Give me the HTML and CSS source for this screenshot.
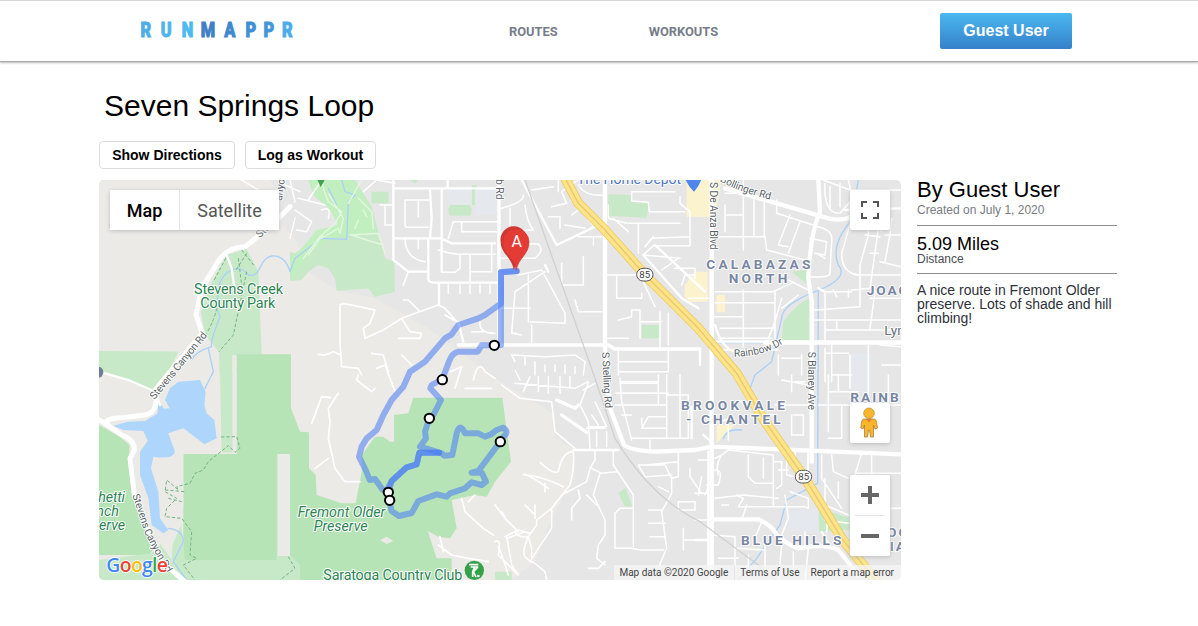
FILE: index.html
```html
<!DOCTYPE html>
<html lang="en">
<head>
<meta charset="utf-8">
<title>RunMappr</title>
<link rel="stylesheet" href="styles.css">
</head>
<body>
<header class="header">
  <svg class="logo" viewBox="0 0 156 24" role="img" aria-label="RUNMAPPR">
    <g transform="translate(.6 19) scale(.82 1)">
      <text x="0" fill="#4eaee5" stroke="#4eaee5">R</text><text x="24.5" fill="#4fb4ea" stroke="#4fb4ea">U</text><text x="50.3" fill="#4cbaf1" stroke="#4cbaf1">N</text>
      <text x="73.5" fill="#3f7fc6" stroke="#3f7fc6">M</text><text x="102" fill="#3e88cf" stroke="#3e88cf">A</text><text x="127.8" fill="#408fd4" stroke="#408fd4">P</text>
      <text x="150" fill="#4297da" stroke="#4297da">P</text><text x="172.5" fill="#4aace8" stroke="#4aace8">R</text>
    </g>
  </svg>
  <nav class="nav"><a>ROUTES</a><a>WORKOUTS</a></nav>
  <button class="user">Guest User</button>
</header>
<main class="main">
  <h1 class="title">Seven Springs Loop</h1>
  <div class="actions"><button class="action directions">Show Directions</button><button class="action workout">Log as Workout</button></div>
  <div class="content">
    <section class="map">
      <svg class="canvas" viewBox="12 15 2406 1200">
        <defs>
          <path id="canyon" d="M174 671L231 602 335 475"/>
          <path id="canyon2" d="M114 960L152 1075Q180 1130 214 1188"/>
          <path id="canyon3" d="M494 190L560 130"/>
          <path id="boll" d="M1874 18Q1940 55 2036 76"/>
          <path id="rain" d="M1917 545Q2010 544 2070 502"/>
        </defs>
        <rect width="2430" height="1230" fill="#e6e6e6"/>
        <path class="rural" d="M0 0H510L560 60 560 150 600 190 640 290 725 345 840 370 1000 460 1200 610 1380 720 1380 790 1440 820 1435 910 1360 1050 1320 1160 1250 1215H0Z"/>
        <!-- parks and open space -->
        <path class="park2" d="M395 240L455 222 490 290 500 540H412V832H380L372 530 330 480 318 410 345 330ZM12 528L250 530 205 615 180 655 105 620 15 590Z"/>
        <path class="park2" d="M585 230L600 235 740 140 700 100 655 60 640 15H780L830 95 850 170 870 250 898 260 900 350 840 366 820 340 725 348 720 310 700 280 670 270 640 290 620 315 585 318Z"/>
        <path fill="#c2efbf" d="M585 250L608 235 665 165 730 150 700 95 655 60 645 15H775L825 90 840 170 700 190 650 230 600 300 585 310Z"/>
        <path class="park" d="M425 538H588V700L615 770 642 772V880L662 900 665 960 740 985H782L800 890 800 840 840 785H865L885 800H897V720L940 715 955 668H1222L1248 860 1200 920 1175 965 1140 960 1070 975 1085 1060 1065 1090 1030 1085 998 1068 1025 1150 1070 1150 1070 1215H265V837H425ZM12 750L75 785 103 810 103 890 135 1010 185 1100 165 1140H12Z"/>
        <path class="park2" d="M12 1155L170 1135 200 1105 235 1160 258 1070 258 1155H545V1143H587L615 1170V1215H12Z"/>
        <path class="rural" d="M547 837H585V1143H547ZM413 545H424V835H413ZM855 1095L875 1085 895 1098 875 1107Z"/>
        <path class="rural" d="M185 1090L230 1155 265 1000V837H380V600H230L180 660 12 600V735L115 805 110 890Z"/>
        <path class="park2" d="M12 590L12 530 250 530 190 650 100 615ZM232 1110L258 1050 270 1155 H230ZM375 590H412V832H380Z"/>
        <path class="park2" d="M830 50H880V85H830ZM1065 90H1125Q1135 105 1125 122H1065Q1055 105 1065 90ZM1130 30H1145V90H1130ZM945 15H970L960 25ZM1540 58L1610 60 1612 82 1662 85 1655 128 1538 122ZM1640 450H1695V490H1640ZM2060 495L2065 440Q2100 390 2142 370L2150 495ZM2090 290L2135 285V328ZM2170 1000L2270 1030V1065L2172 1070ZM1570 955L1592 938 1612 995H1590ZM1200 1190H1250V1215H1200Z"/>
        <path class="cream" d="M1775 15H1880L1860 125H1775ZM1770 330L1800 290H1838V380H1785L1768 365ZM1865 360H1890V412H1865ZM1865 750H1920L1865 805Z"/>
        <path class="campus" d="M1055 45L1130 30V90H1060ZM1140 40H1205V120H1140ZM2265 535H2330V615H2265ZM2270 600H2330V650H2270ZM2075 1010L2170 1000V1070H2085Z"/>
        <!-- reservoir and creeks -->
        <path class="water" d="M210 675L225 640 250 620 315 615 332 650 328 690 335 715 358 735 365 790 328 808 285 775 265 760 220 775 240 830Q235 855 175 845L168 880 190 950 195 1030 220 1065 205 1075 170 1050 160 970 135 900 135 830 158 798 145 768 85 765 55 752 100 740 150 738 188 715 190 675 207 701 224 700Z"/>
        <g class="creek"><path d="M700 40L725 90M740 15L750 50 780 60 760 80 755 193 680 190 600 250 585 290Q570 240 530 243C490 250 500 310 460 300 430 260 380 290 370 340L365 400 375 425Q345 500 350 515 300 530 290 555M340 520L355 590 330 640M220 1060Q265 1065 265 1100L235 1160 275 1215M2290 15L2270 135Q2205 210 2230 270 2265 310 2160 350 2060 390 2060 430L2030 560 1980 600 1965 640M2170 350 2168 925 2075 975 2055 1050 1985 1150 1930 1215M1865 503H2020M1885 790Q1895 760 1940 765"/></g>
        <!-- trails -->
        <path class="trail" d="M400 235L355 320M440 225L480 275M455 235L420 290M455 290L415 480 372 530M430 250L440 330M365 400Q360 430 335 475"/>
        <path class="trail" d="M378 786L425 785 435 820 420 832 400 812 365 840 340 860 325 885 300 895 285 925 245 935 250 945 215 915 210 950 245 970 215 1000 210 1025 260 1030 290 1070 285 1140 305 1150 265 1170 300 1215M210 945L270 950M220 970L260 980M580 1145L600 1180 555 1215"/>
        <!-- local streets -->
        <g class="tiny">
          <path d="M845 580 870 570M735 390L745 385 840 405 825 445 805 460 810 490 865 465 920 430 1030 390 1050 400 1085 440M735 390V500L740 575 790 580 800 600M738 540L715 530 690 540 670 538M830 535L865 540 880 590M920 430L945 470 980 475 975 490 910 490M920 540L950 570M925 375H940L975 410M940 290L925 330M1050 420L1085 440"/>
          <path d="M650 745L680 665 707 668M730 655L700 700 705 740 700 790 720 880 750 920 795 920M700 850L660 880M790 600 785 615 830 650 840 640M870 570L900 650M1065 590 1100 575 1080 640M1135 615Q1150 550 1170 590L1200 610M1110 640H1190"/>
          <path d="M1285 900Q1290 890 1360 940M1405 935Q1330 900 1290 900M1350 925L1350 950M1450 945L1455 970 1430 1000V1035M1220 1010 1230 1025M1200 990L1230 1030 1270 1070M1320 990V1030M1290 990L1320 1020M1235 1090 1290 1070M1210 1115Q1225 1150 1240 1200M1335 862Q1375 900 1390 890 1400 835 1430 830M1530 1160 1510 1180H1480M1475 960 1505 990"/>
          <path d="M1100 970 1110 1010 1165 1060 1195 1080M1120 980 1140 960M1030 1110 1070 1140 1120 1150 1180 1160M1035 1085 1045 1130"/>
        </g>
        <g class="small">
          <path d="M440 15 490 45M570 30 615 50M600 130 585 190M585 15 600 80M610 70 690 90M600 105 650 140 635 170 605 165M680 105Q710 90 700 130M640 75 680 15M805 50 845 15 900 25M855 90H895M870 90V150H895"/>
          <path d="M1005 75H930V150Q930 157 940 157H1000M970 75V125M930 190Q930 250 990 260M970 190V220M1060 190 1075 140H1215M1100 140V170H1215M1030 225Q1060 235 1090 238H1200M1125 240V320M1095 240V280L1080 292H1040M1190 205V290H1130M1060 330V355M1095 330V355M1125 330V355M1155 330V355M1185 330V355M1155 440Q1150 475 1200 475M1130 470H1165M1130 510H1200"/>
          <path d="M1220 100Q1290 80 1285 60M1245 100V150M1290 90Q1295 140 1315 165H1245M1220 205 1330 207Q1350 225 1320 250H1215M1270 300 1340 285 1370 340 1410 415V445L1300 440M1300 300V440M1265 475H1250L1260 350 1350 290M1215 400H1305M1310 450V505M1250 475 1280 480M1310 45 1375 35M1370 95 1415 85 1400 50 1450 15M1360 125H1395V160M1390 15V50M1410 150 1470 160M1450 30Q1470 65 1525 60M1430 120 1470 90"/>
          <path d="M1400 265V330H1465V245M1440 375 1450 410H1520M1450 185H1520M1495 185V210M1535 300H1635L1680 395M1565 300V370H1640V355M1570 435 1610 425V405H1635V490M1635 440H1700M1695 410V520M1600 490H1535M1720 415V510M1540 90V130L1595 145M1555 130 1600 170M1630 145V235"/>
          <path d="M1610 50V78L1660 82 1663 110H1770M1610 50H1740M1755 65V85L1785 110V210M1600 145H1755M1650 215 1670 190 1785 185M1645 240 1675 212H1785M1645 240 1755 250M1700 285 1750 250M1740 280H1800V310M1760 330 1770 300H1800M1675 185 1650 215M1780 370H1840"/>
          <path d="M1260 560 1250 540 1350 545 1440 540 1470 560 1465 600M1290 545V570M1320 560V600M1350 570V590M1380 570V590M1410 570V595M1440 575V595M1260 585 1275 615M1570 560H1720M1570 590H1720M1570 530V600M1720 525 1720 590M1560 655H1720M1580 620H1690"/>
        </g>
        <g class="small">
          <path d="M1845 15V60M1890 55H1950M1890 90V170M1890 120H1945M1945 15V225M1977 50V185M2008 60V185M1865 185H2010L2015 225 2130 255M2045 75V115L2185 160M2085 120 2050 210M2115 140 2080 235M2050 210 2080 215M2145 190 2195 200 2190 240 2160 235M2160 155Q2215 160 2210 200L2205 290Q2210 310 2145 305M2165 235 2190 250M2190 25Q2185 115 2235 115L2265 80M2205 35V100M2235 25V95M2265 90V115M2260 15 2275 80"/>
          <path d="M2185 15 2265 45H2418M2270 130 2240 235Q2240 300 2300 300M2295 130 2320 155V180M2330 105 2360 170M2320 180 2295 270V395M2350 160 2325 340 2270 345M2390 130 2385 180 2370 260M2370 180H2418M2310 180 2355 185M2325 235H2350M2280 300H2418M2355 260 2418 275M2340 350 2325 460M2325 370H2418M2190 350H2270M2190 350V500M2160 405 2295 395M2155 435H2418M2190 465H2418M2225 435V465M2215 345 2225 365M2260 345V365"/>
          <path d="M1860 350H2035L2055 340 2090 325M1860 383H2040M1850 425H1945M1945 345V515M1875 460H2040M1870 490H2030M1880 525H2050M2040 350V490M2060 370 2040 440 2020 490M2080 315 2140 345M2110 360 2060 400M2190 520V620M2210 505V620M2320 510V690M2265 540V640M2355 510 2418 515M2190 535H2260M2360 570H2418M2210 600H2270M2050 540V600M2120 540V600M2060 550H2120"/>
        </g>
        <g class="small">
          <path d="M1220 630 1275 670 1370 680 1380 770 1440 820M1305 605 1285 650M1330 605V650M1360 605V655M1395 605V655M1425 605V640M1260 625 1440 640 1480 620M1480 625 1455 690 1480 740 1485 820M1500 680 1535 755H1480M1505 770V815M1535 770V815M1475 760H1530M1490 720 1510 750M1465 645 1500 625"/>
          <path d="M1500 825V855L1485 880 1475 920 1400 960 1370 1000 1370 1060 1330 1120 1305 1160M1490 880 1520 895 1565 890M1515 895 1495 960 1530 1035V1080L1510 1110 1505 1150 1530 1170M1555 825V870L1615 960V1115M1615 1000H1575L1560 1015V1120H1610L1635 1125H1705M1630 870H1710L1730 910V955L1700 1010 1715 1120 1690 1180M1630 870 1650 905 1730 900M1650 870 1750 860V830M1750 860V905L1730 910M1785 880V905L1820 955M1690 935 1720 950M1660 1005H1700M1660 1045H1710M1665 1085H1710M1750 980V1005H1800V980ZM1765 1060V1125M1765 1095H1800"/>
          <path d="M1435 830Q1440 880 1425 930L1370 1000 1325 1035V1050L1300 1085Q1280 1130 1290 1145L1300 1155 1320 1165 1350 1190 1355 1215M1235 1085 1250 1170 1270 1200M1260 1070Q1270 1090 1300 1085L1310 1120V1150M1200 1100Q1220 1090 1210 1140L1270 1200M1230 1085 1270 1065 1305 1075"/>
          <path d="M1575 625H1690V690M1570 655H1680M1560 690H1715V660H1780M1715 600V790M1755 600V790M1780 660V790M1665 795V820M1610 790H1780M1640 760H1715M1640 760 1660 725 1715 725M1640 750 1640 730M1580 720H1610M1690 600V660M1575 610 1580 680 1610 795"/>
        </g>
        <g class="small">
          <path d="M1880 740 1900 730V795M1930 680H1980V720M2005 720H2045M2095 720H2125V780H2090V720M2060 615 2140 630M2090 600V650M2040 690H2160M2100 620H2130M2200 600V770M2240 690V790H2200M2230 600V650M2200 650H2290M2380 600V690M2180 840V910L2240 1000M2210 840 2215 890 2260 910M2170 690H2418M2300 835 2280 900M2330 830V900M2280 895H2418M2230 920V970M2190 910 2190 990 2260 1020"/>
          <path d="M1860 850 1880 840 1900 825 2035 840V990M1960 840V905L1980 925H2035M2005 850V910M2035 860H2060V930L2045 940M2075 840V900L2100 905M2050 885H2080M2100 830V870M1860 970 1945 960 2050 970M1925 960 1945 970 1930 995H2130L2140 1000V970L2085 950M1845 890Q1890 870 1870 930L1835 930M1810 855H1850M1880 840Q1860 870 1870 900"/>
          <path d="M1850 910 1830 960M1800 955H1840M1800 1035H1840M1880 990H1900M1850 1080 1920 1085V1170M1920 1120 2010 1125M2010 1110V1200M2060 1110 2050 1215M2095 1130V1190M2140 1120 2130 1215M1870 1150H1930M1960 1140V1200M1980 1090 2000 1040M2070 960 2080 1030 2060 1080M2290 900 2340 950M2340 1000H2418M1820 905 1810 960M1940 1035 1955 990M2130 1070V1110M2180 1070 2210 1120M2190 1035 2260 1045M2200 1000 2195 1070"/>
        </g>
        <!-- collectors and arterials -->
        <g class="medium">
          <path d="M895 15V255L940 290H1000M895 40H1215M1058 15V40M1005 190 1010 130 1005 45M1040 40V290M895 190H1040L1070 205H1200M1000 190V315Q1005 323 1020 323H1215M1032 325V390M1090 440 1105 500M1435 825H1570M1280 15 1385 210 1500 155M1350 270 1360 290M1535 160 1500 155 1430 75M1830 350 1680 210M1645 240 1760 370 1810 400"/>
          <path d="M395 240 410 280 420 350M12 590 100 615 180 650M180 650 195 690M2250 105 2418 100M2170 340 2190 350M1850 500H2418"/>
          <path d="M1860 450Q1880 520 1920 530M1815 525V570M1840 830V1200M1800 1095H1840M2140 835 2138 905M1790 695V790M1825 780 1850 800M1860 1190 1840 1180"/>
        </g>
        <path class="major thin" d="M1212 15V510M1090 510H1200L1540 510 1558 522H1815"/>
        <path class="major" d="M1530 15V520L1545 700 1585 805Q1590 825 1680 830L1800 825 1850 815 2418 838M1850 15V1215M2170 15 2175 110Q2145 180 2140 310L2150 380V860"/>
        <path class="major" d="M1890 40 2200 130Q2240 140 2270 125M1845 1033H1990Q2030 1050 2045 1080 2080 1110 2110 1120 2190 1105 2230 1125L2290 1200M2010 503H2418"/>
        <path class="major thin" d="M1400 720 1475 772M1385 675 1440 700 1450 690"/>
        <path class="canyonroad" d="M585 95 520 160 450 215Q390 215 360 275L320 340 303 420 322 475 250 560 180 645Q195 710 150 720L80 728Q38 728 30 745L12 735M30 745 80 780Q120 795 118 825L105 850 118 960 160 1070 200 1160 270 1220"/>
        <path class="rail" d="M1290 15 1500 610 1560 790Q1670 970 1815 1040L1990 1170 2040 1215"/>
        <path class="edge85" d="M1400 -10 1450 85 1530 165 1650 300 1810 460 1925 595 2010 740 2130 910 2240 1090 2345 1220"/>
        <path class="fill85" d="M1400 -10 1450 85 1530 165 1650 300 1810 460 1925 595 2010 740 2130 910 2240 1090 2345 1220"/>
        <path class="line85" d="M1400 -10 1450 85 1530 165 1650 300 1810 460 1925 595 2010 740 2130 910 2240 1090 2345 1220"/>
        <path class="golf" d="M625 250 670 190 720 145 740 110 700 80 690 55 680 20M670 195 730 160 735 175 745 130 700 55M640 240 690 170M760 85 800 15M790 70 830 110 835 160M765 180 850 175 870 235M770 180 830 200 865 210M790 135 780 160M805 105 815 125"/>
        <g class="label roadlabel">
          <text dy="6"><textPath href="#canyon" textLength="250">Stevens Canyon Rd</textPath></text>
          <text dy="2"><textPath href="#canyon2" textLength="256">Stevens Canyon Rd</textPath></text>
          <text><textPath href="#canyon3">Steve</textPath></text>
          <text transform="translate(560 78) rotate(-82)">anyo</text>
          <text><textPath href="#boll" textLength="162">Bollinger Rd</textPath></text>
          <text><textPath href="#rain" textLength="156">Rainbow Dr</textPath></text>
          <text transform="translate(1204 12) rotate(90)">b Rd</text>
          <text transform="translate(1844 21) rotate(90)" textLength="203">S De Anza Blvd</text>
          <text transform="translate(1521 532) rotate(87)" textLength="168">S Stelling Rd</text>
          <text transform="translate(2140 530) rotate(90)" textLength="175">S Blaney Ave</text>
        </g>
        <g class="label parklabel">
          <text x="297" y="357" textLength="267">Stevens Creek</text><text x="316" y="399" textLength="225">County Park</text>
          <g font-style="italic"><text x="608" y="1026" textLength="263">Fremont Older</text><text x="656" y="1067" textLength="162">Preserve</text><text x="10" y="981" textLength="80">hetti</text><text x="4" y="1023">nch</text><text x="12" y="1065">erve</text></g>
          <text x="685" y="1214" textLength="417">Saratoga Country Club</text>
        </g>
        <g class="label town">
          <text x="1834" y="283" textLength="318">CALABAZAS</text><text x="1901" y="324" textLength="182">NORTH</text><text x="2315" y="361">JOAQ</text>
          <text x="1758" y="704" textLength="318">BROOKVALE</text><text x="1773" y="746" textLength="290">- CHANTEL</text><text x="2266" y="681">RAINB</text>
          <text x="1938" y="1110" textLength="307">BLUE HILLS</text><text x="2376" y="1086">OO</text><text x="2384" y="1128">IAN</text>
        </g>
        <text class="label store" x="1446" y="27" textLength="312">The Home Depot</text><text class="label lynbrook" x="2368" y="479">Lynb</text>
        <g class="shield"><rect x="1625" y="280" width="49" height="38" rx="19"/><text x="1649" y="309">85</text><rect x="2101" y="886" width="49" height="38" rx="19"/><text x="2126" y="915">85</text></g>
        <!-- running route -->
        <g class="route">
          <path d="M1265 288 1218 292V510L1198 511H1160L1148 530H1090Q1070 535 1062 560L1042 612 1010 630 1006 640 1038 675 1015 720 1003 730 990 770 993 790 975 815 1040 835 1048 842 1072 840 1085 775Q1095 740 1110 775L1150 775 1170 785 1188 778 1205 765 1225 758Q1244 770 1225 785L1216 800 1150 888 1130 893 1160 893 1173 920 1160 930 1130 922 1110 940 1065 955 1055 965 1025 958 970 978 950 1014 912 1023 890 1008 882 975"/>
          <path d="M1032 833H973L965 868 935 877 890 918 881 950V975"/>
          <path d="M1032 833H973L965 868 935 877 890 918 878 940"/>
          <path d="M880 950 862 943 840 912 824 915 812 885 792 845 800 815 815 790 845 765 865 720 890 675 925 635 945 590 990 560 1050 490 1070 478 1090 450 1150 430 1170 420 1218 385V292L1265 288"/>
        </g>
        <g class="stops"><circle cx="1198" cy="511" r="14"/><circle cx="1042" cy="614" r="14"/><circle cx="1003" cy="730" r="14"/><circle cx="1216" cy="800" r="14"/><circle cx="880" cy="952" r="14"/><circle cx="884" cy="976" r="14"/></g>
        <path fill="#cf3733" d="M1256 285C1253 250 1217 235 1217 200A40 40 0 1 1 1296 200Z"/>
        <path fill="#e53b35" stroke="#cf3733" stroke-width="2" d="M1264 286C1261 250 1223 240 1223 201A39.500 39.500 0 0 1 1302 201C1302 240 1268 250 1264 286Z"/>
        <text class="pin" x="1265" y="217">A</text>
        <path fill="#4e86ee" d="M1770 10H1820Q1815 30 1797 50 1780 35 1770 10Z"/><path fill="#45a04d" d="M665 10H692L677 36Z"/><circle cx="8" cy="592" r="17" fill="#6f7d96"/>
        <circle cx="1138" cy="1186" r="29" fill="#34a249"/><path fill="none" stroke="#fff" stroke-width="5" d="M1122 1169H1150M1127 1176H1150M1139 1176 1133 1190V1206M1147 1178 1135 1190 1143 1206"/><circle cx="1150" cy="1203" r="4" fill="#fff"/>
        <text class="google" x="34" y="1191" textLength="185"><tspan fill="#4285f4">G</tspan><tspan fill="#ea4335">o</tspan><tspan fill="#fbbc05">o</tspan><tspan fill="#4285f4">g</tspan><tspan fill="#34a853">l</tspan><tspan fill="#ea4335">e</tspan></text>
      </svg>
      <div class="types control"><button class="on">Map</button><button>Satellite</button></div>
      <button class="control full" aria-label="Fullscreen"><svg viewBox="0 0 18 18"><path d="M1 6V1H6M12 1H17V6M17 12V17H12M6 17H1V12"/></svg></button>
      <button class="control peg" aria-label="Street View"><svg viewBox="0 0 18 32"><path fill="#f9b62b" stroke="#a98042" stroke-width=".8" d="M4 12H14Q16 12 16.500 15L17.500 21 15 22 13.500 18V30H10.500L9.500 23H8.500L7.500 30H4.500V18L3 22 .8 21 1.600 15Q2 12 4 12Z"/><path fill="#e77d31" d="M6 12H12L9 15.500Z"/><circle cx="9" cy="6.300" r="5.300" fill="#f9b62b" stroke="#b98733" stroke-width=".7"/></svg></button>
      <div class="control zoom"><button aria-label="Zoom in"><svg viewBox="0 0 18 18"><path d="M0 9H18M9 0V18"/></svg></button><button aria-label="Zoom out"><svg viewBox="0 0 18 18"><path d="M0 9H18"/></svg></button></div>
      <div class="legal"><span>Map data ©2020 Google</span><span>Terms of Use</span><span>Report a map error</span></div>
    </section>
    <aside class="details">
      <h2 class="author">By Guest User</h2>
      <p class="date">Created on July 1, 2020</p>
      <div class="stat"><p class="miles">5.09 Miles</p><p class="caption">Distance</p></div>
      <p class="desc">A nice route in Fremont Older preserve. Lots of shade and hill climbing!</p>
    </aside>
  </div>
</main>
</body>
</html>
```
FILE: styles.css
```css
* { box-sizing: border-box; }
body { margin: 0; height: 626px; overflow: hidden; background: #fff; font-family: "Liberation Sans", Arial, sans-serif; }
h1, h2, p { margin: 0; font-weight: 400; }
button { margin: 0; padding: 0; border: 0; background: #fff; font-family: inherit; }
.header { display: grid; grid-template-columns: 369px 431px 132px; height: 62px; padding-left: 140px; border-top: 1px solid #d6d6d6; border-bottom: 1px solid #aaa; box-shadow: 0 1px 2px #bbb; }
.logo { width: 156px; height: 24px; margin-top: 17px; font: 900 20px Roboto, sans-serif; stroke-width: .9; }
.nav { display: flex; gap: 91px; padding-top: 23px; color: #767d89; font: 700 12.85px/16px Roboto, sans-serif; }
.user { width: 132px; height: 36px; margin-top: 12px; border-radius: 2px; background: linear-gradient(#4bb8f0, #3581c9); color: #fff; font-size: 16px; font-weight: 700; }
.main { padding: 26px 0 0 99px; }
.title { height: 53px; padding-left: 5px; font-size: 30px; line-height: 36px; }
.actions { display: flex; gap: 10px; margin-bottom: 11px; }
.action { height: 28px; border: 1px solid #ddd; border-radius: 4px; font-size: 14px; font-weight: 700; }
.directions { width: 136px; }
.workout { width: 131px; }
.content { display: flex; gap: 16px; }
.map { position: relative; width: 802px; height: 400px; overflow: hidden; border-radius: 5px; font-family: Roboto, sans-serif; }
.canvas { display: block; width: 802px; height: 400px; }
.rural { fill: #ebeae7; }
.park { fill: #b7e4b7; }
.park2 { fill: #c8e9c7; }
.cream { fill: #fbf3ce; }
.campus { fill: #e5e8ec; }
.water { fill: #aed6fc; }
.creek, .trail, .tiny, .small, .medium, .major, .canyonroad, .rail, .edge85, .fill85, .line85, .golf, .route { fill: none; stroke-linejoin: round; stroke-linecap: round; }
.creek { stroke: #aad1f5; stroke-width: 4; }
.trail { stroke: #72b580; stroke-width: 3; stroke-dasharray: 10 6; stroke-linecap: butt; }
.tiny { stroke: #fff; stroke-width: 5; }
.small { stroke: #fff; stroke-width: 4.5; }
.medium { stroke: #fff; stroke-width: 7; }
.major { stroke: #fff; stroke-width: 13; }
.thin { stroke-width: 10; }
.canyonroad { stroke: #fff; stroke-width: 15; }
.rail { stroke: #d0d0d0; stroke-width: 4; }
.edge85 { stroke: #edca62; stroke-width: 30; }
.fill85 { stroke: #fde48b; stroke-width: 25; }
.line85 { stroke: #e9c868; stroke-width: 4; }
.golf { stroke: #e3f7df; stroke-width: 4; }
.label { paint-order: stroke; stroke: #fff; stroke-width: 6; stroke-linejoin: round; }
.roadlabel { fill: #5a5f66; font-size: 31px; stroke-width: 5; }
.parklabel { fill: #2c8453; font-size: 43px; }
.town { fill: #7886a2; font-size: 41px; font-weight: 700; letter-spacing: 6px; }
.store { fill: #4e76bd; font-size: 42px; }
.lynbrook { fill: #69717e; font-size: 41px; }
.shield rect { fill: #fff; stroke: #555; stroke-width: 3; }
.shield text { fill: #444; font-size: 29px; text-anchor: middle; }
.route { stroke: #4b7df5; stroke-width: 18; }
.route path { stroke-opacity: .56; }
.stops { fill: #fff; stroke: #000; stroke-width: 6; }
.pin { fill: #fff; font-size: 48px; text-anchor: middle; }
.google { font: 600 58px "Open Sans", sans-serif; paint-order: stroke; stroke: #fff; stroke-width: 5; }
.control { position: absolute; border-radius: 2px; background: #fff; box-shadow: 0 1px 4px #bbb; }
.types { left: 11px; top: 10px; display: grid; grid-template-columns: 70px 99px; width: 169px; height: 40px; }
.types button { color: #565656; font-size: 18px; }
.types .on { border-right: 1px solid #e5e5e5; color: #000; font-weight: 500; }
.full { left: 751px; top: 10px; width: 40px; height: 40px; }
.full svg { display: block; width: 18px; margin: 11px; fill: none; stroke: #555; stroke-width: 2; }
.peg { left: 751px; top: 223px; width: 40px; height: 40px; }
.peg svg { display: block; width: 18px; height: 32px; margin: 4px 10px; }
.zoom { left: 751px; top: 295px; width: 40px; height: 81px; }
.zoom button { display: block; width: 30px; height: 40px; margin: 0 5px; }
.zoom button + button { border-top: 1px solid #e6e6e6; }
.zoom svg { display: block; width: 18px; margin: 0 6px; stroke: #666; stroke-width: 4; }
.legal { position: absolute; right: 0; bottom: 0; display: flex; gap: 1px; color: #444; font-size: 10px; line-height: 15px; white-space: nowrap; }
.legal span { padding: 0 5px; background: rgba(245,245,245,.75); }
.legal span:first-child { padding-right: 6px; }
.legal span:last-child { padding-right: 7px; }
.details { width: 200px; }
.author { height: 24px; margin-top: -2px; font-size: 22px; line-height: 24px; }
.date { height: 24px; padding-top: 1px; border-bottom: 1px solid #8c8c91; color: #777b82; font-size: 12px; line-height: 15px; }
.stat { height: 48px; padding-top: 8px; border-bottom: 1px solid #8c8c91; }
.miles { font-size: 18px; line-height: 20px; }
.caption { color: #4a4d55; font-size: 12px; line-height: 11px; }
.desc { padding-top: 9px; color: #2d3038; font-size: 14px; line-height: 14px; }
```
